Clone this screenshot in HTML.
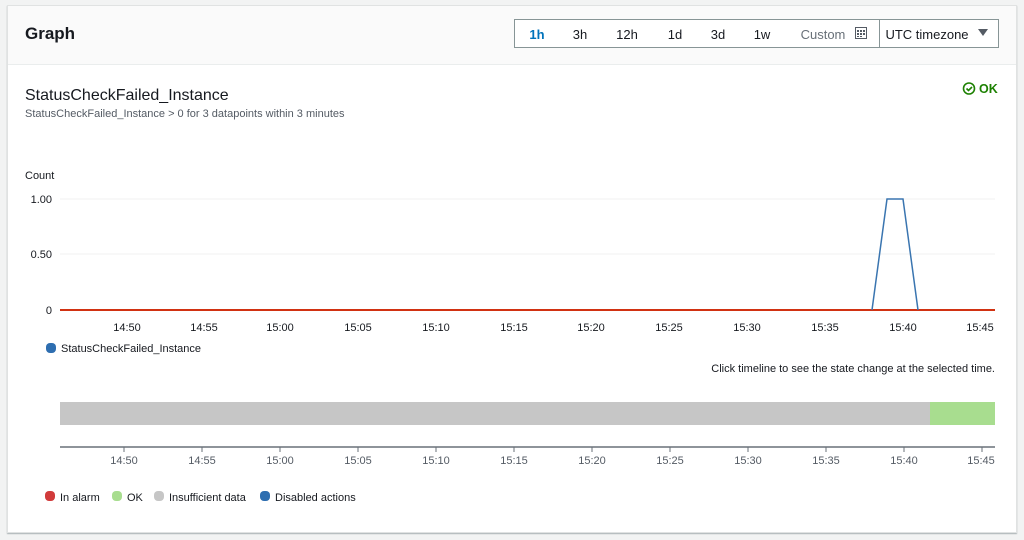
<!DOCTYPE html>
<html><head><style>
body{margin:0;width:1024px;height:540px;background:#f2f3f3;font-family:"Liberation Sans",sans-serif;overflow:hidden;position:relative}
.card{position:absolute;left:7px;top:5px;width:1008px;height:526px;background:#fff;border:1px solid #e0e2e2;box-shadow:0 1px 1px rgba(0,28,36,.3)}
.hdr{position:absolute;left:0;top:0;width:1008px;height:58px;background:#fafafa;border-bottom:1px solid #eaeded}
svg{position:absolute;left:0;top:0}
</style></head><body>
<div class="card"><div class="hdr"></div></div>
<svg width="1024" height="540" font-family="Liberation Sans, sans-serif">
<text x="25" y="39" font-size="17" font-weight="bold" fill="#16191f">Graph</text>
<rect x="514.5" y="19.5" width="484" height="28" fill="#fff" stroke="#879596"/>
<line x1="879.5" y1="20" x2="879.5" y2="47" stroke="#879596"/>
<g font-size="13" fill="#16191f" text-anchor="middle">
<text x="537" y="39" fill="#0073bb" font-weight="bold">1h</text>
<text x="580" y="39">3h</text><text x="627" y="39">12h</text><text x="675" y="39">1d</text><text x="718" y="39">3d</text><text x="762" y="39">1w</text>
<text x="823" y="39" fill="#687078">Custom</text>
<text x="927" y="39">UTC timezone</text>
</g>
<rect x="855.5" y="27.5" width="11" height="11" fill="none" stroke="#545b64"/>
<g fill="#545b64"><rect x="857" y="30" width="2" height="2"/><rect x="860" y="30" width="2" height="2"/><rect x="863" y="30" width="2" height="2"/><rect x="857" y="33" width="2" height="2"/><rect x="860" y="33" width="2" height="2"/><rect x="863" y="33" width="2" height="2"/><rect x="857" y="36" width="2" height="1"/><rect x="860" y="36" width="2" height="1"/></g>
<path d="M978 29h10l-5 7z" fill="#545b64"/>
<text x="25" y="100" font-size="16" fill="#16191f">StatusCheckFailed_Instance</text>
<text x="25" y="117" font-size="11" fill="#545b64">StatusCheckFailed_Instance &gt; 0 for 3 datapoints within 3 minutes</text>
<circle cx="969" cy="88.5" r="5.5" fill="none" stroke="#1d8102" stroke-width="1.6"/>
<path d="M966.5 88.5l2 2 3.5-3.5" fill="none" stroke="#1d8102" stroke-width="1.6"/>
<text x="979" y="93" font-size="12.5" font-weight="bold" fill="#1d8102">OK</text>
<text x="25" y="179" font-size="11" fill="#16191f">Count</text>
<g font-size="11" fill="#16191f" text-anchor="end"><text x="52" y="203">1.00</text><text x="52" y="258">0.50</text><text x="52" y="314">0</text></g>
<line x1="60" y1="199" x2="995" y2="199" stroke="#f0f0f0"/>
<line x1="60" y1="254" x2="995" y2="254" stroke="#f0f0f0"/>
<line x1="60" y1="310" x2="995" y2="310" stroke="#d13212" stroke-width="2"/>
<path d="M872 310L887 199H903L918 310" fill="none" stroke="#3a75b0" stroke-width="1.5"/>
<g font-size="11" fill="#16191f" text-anchor="middle">
<text x="127" y="331">14:50</text><text x="204" y="331">14:55</text><text x="280" y="331">15:00</text><text x="358" y="331">15:05</text><text x="436" y="331">15:10</text><text x="514" y="331">15:15</text><text x="591" y="331">15:20</text><text x="669" y="331">15:25</text><text x="747" y="331">15:30</text><text x="825" y="331">15:35</text><text x="903" y="331">15:40</text><text x="980" y="331">15:45</text>
</g>
<rect x="46" y="343" width="10" height="10" rx="4" fill="#2e6eb0"/>
<text x="61" y="352" font-size="11" fill="#16191f">StatusCheckFailed_Instance</text>
<text x="995" y="372" font-size="11" fill="#16191f" text-anchor="end">Click timeline to see the state change at the selected time.</text>
<rect x="60" y="402" width="870" height="23" fill="#c6c6c6"/>
<rect x="930" y="402" width="65" height="23" fill="#a8dd8f"/>
<line x1="60" y1="447" x2="995" y2="447" stroke="#687078" stroke-width="1.5"/>
<g stroke="#687078"><line x1="124" y1="447" x2="124" y2="452"/><line x1="202" y1="447" x2="202" y2="452"/><line x1="280" y1="447" x2="280" y2="452"/><line x1="358" y1="447" x2="358" y2="452"/><line x1="436" y1="447" x2="436" y2="452"/><line x1="514" y1="447" x2="514" y2="452"/><line x1="592" y1="447" x2="592" y2="452"/><line x1="670" y1="447" x2="670" y2="452"/><line x1="748" y1="447" x2="748" y2="452"/><line x1="826" y1="447" x2="826" y2="452"/><line x1="904" y1="447" x2="904" y2="452"/><line x1="982" y1="447" x2="982" y2="452"/></g>
<g font-size="11" fill="#545b64" text-anchor="middle">
<text x="124" y="464">14:50</text><text x="202" y="464">14:55</text><text x="280" y="464">15:00</text><text x="358" y="464">15:05</text><text x="436" y="464">15:10</text><text x="514" y="464">15:15</text><text x="592" y="464">15:20</text><text x="670" y="464">15:25</text><text x="748" y="464">15:30</text><text x="826" y="464">15:35</text><text x="904" y="464">15:40</text><text x="981" y="464">15:45</text>
</g>
<g font-size="11" fill="#16191f">
<rect x="45" y="491" width="10" height="10" rx="4" fill="#d13b3b"/><text x="60" y="501">In alarm</text>
<rect x="112" y="491" width="10" height="10" rx="4" fill="#a8dd8f"/><text x="127" y="501">OK</text>
<rect x="154" y="491" width="10" height="10" rx="4" fill="#c6c6c6"/><text x="169" y="501">Insufficient data</text>
<rect x="260" y="491" width="10" height="10" rx="4" fill="#2e6eb0"/><text x="275" y="501">Disabled actions</text>
</g>
</svg>
</body></html>
